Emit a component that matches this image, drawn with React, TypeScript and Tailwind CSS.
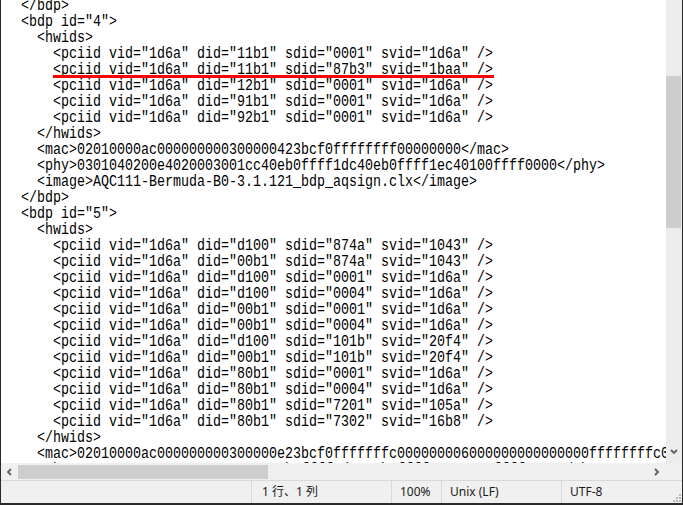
const lines = [
  '  </bdp>',
  '  <bdp id="4">',
  '    <hwids>',
  '      <pciid vid="1d6a" did="11b1" sdid="0001" svid="1d6a" />',
  '      <pciid vid="1d6a" did="11b1" sdid="87b3" svid="1baa" />',
  '      <pciid vid="1d6a" did="12b1" sdid="0001" svid="1d6a" />',
  '      <pciid vid="1d6a" did="91b1" sdid="0001" svid="1d6a" />',
  '      <pciid vid="1d6a" did="92b1" sdid="0001" svid="1d6a" />',
  '    </hwids>',
  '    <mac>02010000ac000000000300000423bcf0ffffffff00000000</mac>',
  '    <phy>0301040200e4020003001cc40eb0ffff1dc40eb0ffff1ec40100ffff0000</phy>',
  '    <image>AQC111-Bermuda-B0-3.1.121_bdp_aqsign.clx</image>',
  '  </bdp>',
  '  <bdp id="5">',
  '    <hwids>',
  '      <pciid vid="1d6a" did="d100" sdid="874a" svid="1043" />',
  '      <pciid vid="1d6a" did="00b1" sdid="874a" svid="1043" />',
  '      <pciid vid="1d6a" did="d100" sdid="0001" svid="1d6a" />',
  '      <pciid vid="1d6a" did="d100" sdid="0004" svid="1d6a" />',
  '      <pciid vid="1d6a" did="00b1" sdid="0001" svid="1d6a" />',
  '      <pciid vid="1d6a" did="00b1" sdid="0004" svid="1d6a" />',
  '      <pciid vid="1d6a" did="d100" sdid="101b" svid="20f4" />',
  '      <pciid vid="1d6a" did="00b1" sdid="101b" svid="20f4" />',
  '      <pciid vid="1d6a" did="80b1" sdid="0001" svid="1d6a" />',
  '      <pciid vid="1d6a" did="80b1" sdid="0004" svid="1d6a" />',
  '      <pciid vid="1d6a" did="80b1" sdid="7201" svid="105a" />',
  '      <pciid vid="1d6a" did="80b1" sdid="7302" svid="16b8" />',
  '    </hwids>',
  '    <mac>02010000ac000000000300000e23bcf0fffffffc000000006000000000000000ffffffffc0000000</mac>',
  '    <phy>0301040200e4020003001cc40eb0ffff1dc40eb0ffff1ec40100ffff0000</phy>',
];

function Arrow({ dir }: { dir: "down" | "left" | "right" }) {
  const d =
    dir === "down"
      ? "M1 2 L4 5 L7 2"
      : dir === "left"
      ? "M5 1 L2 4 L5 7"
      : "M3 1 L6 4 L3 7";
  return (
    <svg width="8" height="8" viewBox="0 0 8 8" className="shrink-0">
      <path d={d} fill="none" stroke="#606060" strokeWidth="1.8" />
    </svg>
  );
}

function Grip() {
  const dots = [
    [7, 1],
    [4, 4],
    [7, 4],
    [1, 7],
    [4, 7],
    [7, 7],
  ];
  return (
    <svg width="9" height="9" viewBox="0 0 9 9">
      {dots.map(([x, y]) => (
        <rect key={`${x}-${y}`} x={x} y={y} width="2" height="2" fill="#b8b8b8" />
      ))}
    </svg>
  );
}

export default function App() {
  return (
    <div className="w-[683px] h-[505px] flex flex-col bg-[#2a2a2a] overflow-hidden">
      <div className="flex flex-col flex-1 ml-[1px] mr-[1px] bg-[#f0f0f0]">
        {/* editor + vertical scrollbar */}
        <div className="flex h-[463px]">
          <div className="relative flex-1 overflow-hidden bg-white pl-[4px]">
            <div
              className="-mt-[2px] w-max origin-left scale-x-[0.8333] whitespace-pre text-[16px] leading-[16px] text-black"
              style={{ fontFamily: '"Liberation Mono", "DejaVu Sans Mono", monospace' }}
            >
              {lines.map((line, i) => (
                <div key={i} className="h-[16px]">
                  {line}
                </div>
              ))}
            </div>
            <div className="absolute left-[52px] top-[75px] w-[441px] h-[3px] bg-[#ff0000]" />
          </div>
          <div className="w-[16px] flex flex-col bg-[#ececec]">
            <div className="h-[76px]" />
            <div className="h-[152px] bg-[#cdcdcd] mr-[1px]" />
            <div className="flex-1" />
            <div className="h-[16px] flex items-center justify-center mb-[3px]">
              <Arrow dir="down" />
            </div>
          </div>
        </div>

        {/* horizontal scrollbar */}
        <div className="flex h-[17px]">
          <div className="flex-1 flex items-center bg-[#f0f0f0]">
            <div className="w-[17px] flex items-center justify-center">
              <Arrow dir="left" />
            </div>
            <div className="w-[250px] h-[14px] bg-[#cdcdcd]" />
            <div className="flex-1" />
            <div className="w-[17px] flex items-center justify-center mr-[2px]">
              <Arrow dir="right" />
            </div>
          </div>
          <div className="w-[16px] bg-[#f0f0f0]" />
        </div>

        {/* status bar */}
        <div
          className="flex h-[23px] border-t border-[#d9d9d9] bg-[#f0f0f0] text-[12px] text-[#1a1a1a]"
          style={{ fontFamily: '"Noto Sans", "Noto Sans CJK JP", sans-serif' }}
        >
          <div className="w-[250px]" />
          <div className="w-[140px] flex items-center pl-[10px] border-l border-[#dadada]">1 行、1 列</div>
          <div className="w-[50px] flex items-center pl-[8px] border-l border-[#dadada]">100%</div>
          <div className="w-[120px] flex items-center pl-[8px] border-l border-[#dadada]">Unix (LF)</div>
          <div className="flex-1 flex items-center pl-[8px] border-l border-[#dadada] relative">
            UTF-8
            <div className="absolute right-[1px] bottom-[1px]">
              <Grip />
            </div>
          </div>
        </div>
      </div>
      <div className="h-[2px]" />
    </div>
  );
}
